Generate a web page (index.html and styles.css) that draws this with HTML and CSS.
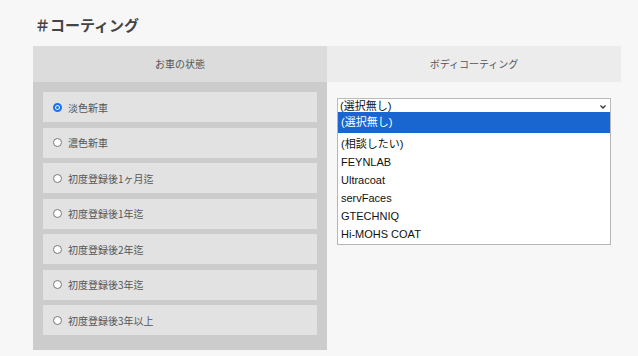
FILE: index.html
```html
<!DOCTYPE html>
<html lang="ja">
<head>
    <meta charset="UTF-8">
    <meta name="viewport" content="width=device-width, initial-scale=1.0">
    <title>コーティング</title>
    <link rel="stylesheet" href="styles.css">
</head>
<body>
    <div class="wrap">
        <!-- 見出し -->
        <h2 class="title">＃コーティング</h2>

        <div class="table">
            <!-- お車の状態 -->
            <div class="col col-left">
                <div class="head">お車の状態</div>
                <div class="body">
                    <label class="item"><span class="radio checked"></span>淡色新車</label>
                    <label class="item"><span class="radio"></span>濃色新車</label>
                    <label class="item"><span class="radio"></span>初度登録後1ヶ月迄</label>
                    <label class="item"><span class="radio"></span>初度登録後1年迄</label>
                    <label class="item"><span class="radio"></span>初度登録後2年迄</label>
                    <label class="item"><span class="radio"></span>初度登録後3年迄</label>
                    <label class="item"><span class="radio"></span>初度登録後3年以上</label>
                </div>
            </div>

            <!-- ボディコーティング -->
            <div class="col col-right">
                <div class="head">ボディコーティング</div>
                <div class="body">
                    <div class="select">
                        <div class="select-box">
                            <span>(選択無し)</span>
                            <svg class="chev" width="8" height="6" viewBox="0 0 8 6"><path d="M1.5 1.5 L4 4 L6.5 1.5" fill="none" stroke="#333" stroke-width="1.3"/></svg>
                        </div>
                        <ul class="options">
                            <li class="active">(選択無し)</li>
                            <li>(相談したい)</li>
                            <li>FEYNLAB</li>
                            <li>Ultracoat</li>
                            <li>servFaces</li>
                            <li>GTECHNIQ</li>
                            <li>Hi-MOHS COAT</li>
                        </ul>
                    </div>
                </div>
            </div>
        </div>
    </div>
</body>
</html>
```

FILE: styles.css
```css
body {
    margin: 0;
    background-color: #f7f7f7;
    font-family: 'Noto Sans CJK JP', 'Noto Sans', sans-serif;
    color: #555;
}

.wrap {
    padding: 0 17px 0 33px;
}

/* 見出し */
.title {
    margin: 0;
    height: 46px;
    box-sizing: border-box;
    padding: 14px 0 0 2px;
    font-size: 15px;
    line-height: 22px;
    font-weight: bold;
    color: #444;
}

/* テーブル */
.table {
    display: grid;
    grid-template-columns: 294px 294px;
}

.head {
    height: 36px;
    line-height: 36px;
    text-align: center;
    font-size: 10px;
    color: #555;
}

.col-left .head {
    background-color: #dcdcdc;
}

.col-right .head {
    background-color: #ececec;
}

.col-left .body {
    background-color: #cccccc;
    padding: 10px 10px 15px;
    display: flex;
    flex-direction: column;
    gap: 5.5px;
}

.item {
    display: flex;
    align-items: center;
    height: 30px;
    background-color: #e2e2e2;
    padding-left: 10px;
    font-size: 10px;
    color: #555;
}

.radio {
    width: 7px;
    height: 7px;
    border: 1px solid #777;
    border-radius: 50%;
    background-color: #fff;
    margin-right: 6px;
    box-sizing: content-box;
}

.radio.checked {
    width: 5px;
    height: 5px;
    border: 2px solid #1a73e8;
    background-color: #1a73e8;
    box-shadow: inset 0 0 0 1px #fff;
}

/* セレクト */
.col-right .body {
    padding: 16px 10px 0;
}

.select {
    position: relative;
    font-family: 'Liberation Sans', 'Noto Sans CJK JP', sans-serif;
    font-size: 11px;
    color: #111;
}

.select-box {
    height: 14px;
    border: 1px solid #bbb;
    border-bottom: none;
    background-color: #fff;
    display: flex;
    align-items: center;
    justify-content: space-between;
    padding: 0 3px 0 2px;
    line-height: 14px;
}

.chev {
    margin-top: 1px;
}

.options {
    position: absolute;
    top: 14px;
    left: 0;
    right: 0;
    margin: 0;
    padding: 0 0 1px;
    list-style: none;
    background-color: #fff;
    border: 1px solid #b5b5b5;
    border-top: none;
}

.options li {
    height: 18px;
    line-height: 18px;
    padding-left: 3px;
}

.options li.active {
    height: 21px;
    line-height: 21px;
    background-color: #1a66d0;
    color: #fff;
    margin-bottom: 2px;
}
```
